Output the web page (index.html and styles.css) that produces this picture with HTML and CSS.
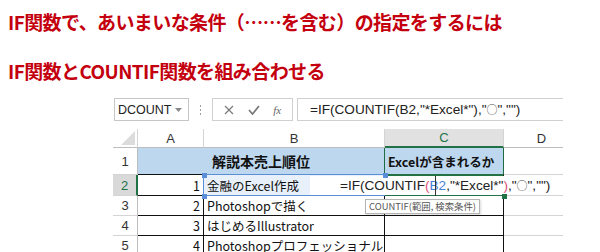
FILE: index.html
```html
<!DOCTYPE html>
<html lang="ja">
<head>
  <meta charset="UTF-8" />
  <title>IF関数とCOUNTIF関数</title>
  <link rel="stylesheet" href="styles.css">
</head>
<body>
  <div class="title">
    <p class="headline">IF関数で、あいまいな条件（……を含む）の指定をするには</p>
    <p class="headline">IF関数とCOUNTIF関数を組み合わせる</p>
  </div>

  <div class="sheet">
    <div class="formula-bar">
      <div class="name-box">
        <span>DCOUNT</span>
        <svg class="drop" width="7" height="4" viewBox="0 0 7 4"><path d="M0 0h7L3.5 4z" fill="#8a8a8a"/></svg>
      </div>
      <div class="grip">
        <span></span><span></span><span></span>
      </div>
      <div class="fx-box">
        <svg width="10" height="10" viewBox="0 0 10 10"><path d="M1 1l8 8M9 1l-8 8" stroke="#7a7a7a" stroke-width="1.2" fill="none"/></svg>
        <svg width="12" height="10" viewBox="0 0 12 10"><path d="M1 5l3.5 4L11 1" stroke="#7a7a7a" stroke-width="1.8" fill="none"/></svg>
        <span class="fx">fx</span>
      </div>
      <div class="formula-input">=IF(COUNTIF(B2,"*Excel*"),"<span class="circle">○</span>","")</div>
    </div>

    <div class="grid">
      <div class="corner"><svg width="14" height="14" viewBox="0 0 14 14"><path d="M14 0v14H0z" fill="#dcdcdc"/></svg></div>
      <div class="col-head">A</div>
      <div class="col-head">B</div>
      <div class="col-head active">C</div>
      <div class="col-head">D</div>

      <div class="row-head">1</div>
      <div class="cell head merged">解説本売上順位</div>
      <div class="cell head check">Excelが含まれるか</div>
      <div class="cell plain"></div>

      <div class="row-head active">2</div>
      <div class="cell num table">1</div>
      <div class="cell table ref">金融のExcel作成</div>
      <div class="cell table current"></div>
      <div class="cell plain"></div>

      <div class="row-head">3</div>
      <div class="cell num table">2</div>
      <div class="cell table">Photoshopで描く</div>
      <div class="cell table"></div>
      <div class="cell plain"></div>

      <div class="row-head">4</div>
      <div class="cell num table">3</div>
      <div class="cell table">はじめるIllustrator</div>
      <div class="cell table"></div>
      <div class="cell plain"></div>

      <div class="row-head">5</div>
      <div class="cell num table">4</div>
      <div class="cell table">Photoshopプロフェッショナル</div>
      <div class="cell table"></div>
      <div class="cell plain"></div>

      <!-- in-cell editor and helpers over the grid -->
      <div class="editor">=IF(COUNTIF<span class="paren">(</span><span class="refb">B2</span>,"*Excel*"<span class="paren">)</span>,"<span class="circle">○</span>","")</div>
      <div class="caret-line"></div>
      <span class="handle h1"></span>
      <span class="handle h2"></span>
      <span class="handle h3"></span>
      <span class="handle green"></span>
      <div class="tip">COUNTIF(範囲, 検索条件)</div>
    </div>
  </div>
</body>
</html>
```

FILE: styles.css
```css
* {
  box-sizing: border-box;
}

body {
  margin: 0;
  background: #fff;
  font-family: "Noto Sans CJK JP", sans-serif;
  width: 600px;
  height: 252px;
  overflow: hidden;
}

.title {
  padding-left: 8px;
  display: flex;
  flex-direction: column;
  gap: 5px;
}

.headline {
  margin: 0;
  height: 44px;
  line-height: 44px;
  font-size: 19px;
  font-weight: bold;
  letter-spacing: -0.6px;
  color: #c4000e;
  white-space: nowrap;
}

.sheet {
  margin: 5px 0 0 113px;
  width: 450px;
  overflow: hidden;
}

/* formula bar */
.formula-bar {
  display: flex;
  align-items: stretch;
  height: 23px;
}

.name-box {
  margin-left: 1px;
  width: 75px;
  border: 1px solid #c6c6c6;
  display: flex;
  align-items: center;
  justify-content: space-between;
  padding: 0 6px 0 3px;
  font-family: "Liberation Sans", sans-serif;
  font-size: 12.5px;
  color: #222;
}

.grip {
  width: 23px;
  display: flex;
  flex-direction: column;
  align-items: center;
  justify-content: center;
  gap: 2px;
}

.grip span {
  width: 1px;
  height: 2px;
  background: #a0a0a0;
}

.fx-box {
  width: 81px;
  border: 1px solid #d0d0d0;
  display: flex;
  align-items: center;
  justify-content: space-around;
  padding: 0 4px;
}

.fx {
  font-family: "Liberation Serif", serif;
  font-style: italic;
  font-size: 11px;
  color: #666;
}

.formula-input {
  margin-left: 4px;
  flex: 1;
  border-top: 1px solid #d0d0d0;
  border-bottom: 1px solid #d0d0d0;
  border-left: 1px solid #d0d0d0;
  padding-left: 12px;
  font-family: "Liberation Sans", sans-serif;
  font-size: 13.6px;
  line-height: 21px;
  color: #222;
  white-space: nowrap;
}

.circle {
  font-family: "Noto Sans CJK JP", sans-serif;
  font-size: 11px;
  color: #555;
}

/* sheet grid */
.grid {
  position: relative;
  margin-top: 8px;
  display: grid;
  grid-template-columns: 25px 66px 181px 119px 76px;
  grid-template-rows: 19px 27px 21px 20px 20px 20px;
  width: 467px;
  font-size: 12.5px;
}

.corner {
  display: flex;
  align-items: flex-end;
  justify-content: flex-end;
  padding: 0 2px 2px 0;
  border-right: 1px solid #d4d4d4;
  border-bottom: 1px solid #bdbdbd;
}

.col-head {
  display: flex;
  align-items: center;
  justify-content: center;
  font-family: "Liberation Sans", sans-serif;
  font-size: 13px;
  color: #333;
  border-right: 1px solid #d4d4d4;
  border-bottom: 1px solid #bdbdbd;
}

.col-head.active {
  background: #e1e1e1;
  color: #217346;
  border-bottom: 2px solid #217346;
}

.row-head {
  display: flex;
  align-items: center;
  justify-content: center;
  font-family: "Liberation Sans", sans-serif;
  font-size: 13px;
  color: #333;
  border-right: 1px solid #bdbdbd;
  border-bottom: 1px solid #d4d4d4;
}

.row-head.active {
  background: #d9d9d9;
  color: #217346;
  border-right: 2px solid #217346;
}

.cell {
  display: flex;
  align-items: center;
  padding: 0 3px;
  white-space: nowrap;
  color: #111;
  border-right: 1px solid #d4d4d4;
  border-bottom: 1px solid #d4d4d4;
}

.cell.head {
  background: #bdd7ee;
  font-weight: bold;
  border-bottom: 1px solid #111;
}

.cell.merged {
  grid-column: span 2;
  justify-content: center;
  font-size: 14px;
  border-right: 1px solid #111;
}

.cell.check {
  font-size: 12.5px;
  border-right: 1px solid #1f6b43;
  border-left: 1px solid #1f6b43;
  margin-left: -1px;
}

.cell.table {
  border-right-color: #111;
  border-bottom-color: #111;
}

.cell.num {
  justify-content: flex-end;
}

.cell.ref {
  background: #e8f0fb;
  border: 1px solid #5a8fd8;
  margin: -1px 0 0 -1px;
}

.cell.current {
  border-top: 2px solid #217346;
  border-bottom: 2px solid #217346;
  margin-top: -1px;
}

.editor {
  position: absolute;
  left: 197px;
  top: 47px;
  width: 250px;
  height: 19px;
  background: #fff;
  padding-left: 30px;
  font-family: "Liberation Sans", sans-serif;
  font-size: 13.6px;
  line-height: 19px;
  color: #222;
  white-space: nowrap;
}

.paren {
  color: #e0507a;
}

.refb {
  color: #4a7fd8;
}

.caret-line {
  position: absolute;
  left: 322px;
  top: 47px;
  width: 1px;
  height: 20px;
  background: #333;
}

.handle {
  position: absolute;
  width: 5px;
  height: 5px;
  background: #5a8fd8;
}

.h1 { left: 89px; top: 44px; }
.h2 { left: 89px; top: 65px; }
.h3 { left: 270px; top: 44px; }

.handle.green {
  left: 389px;
  top: 65px;
  background: #217346;
}

.tip {
  position: absolute;
  left: 252px;
  top: 70px;
  height: 15px;
  padding: 0 3px;
  background: #fff;
  border: 1px solid #b4b4b4;
  box-shadow: 1px 1px 2px rgba(0, 0, 0, 0.15);
  font-size: 9.4px;
  line-height: 13px;
  color: #555;
  white-space: nowrap;
}
```
